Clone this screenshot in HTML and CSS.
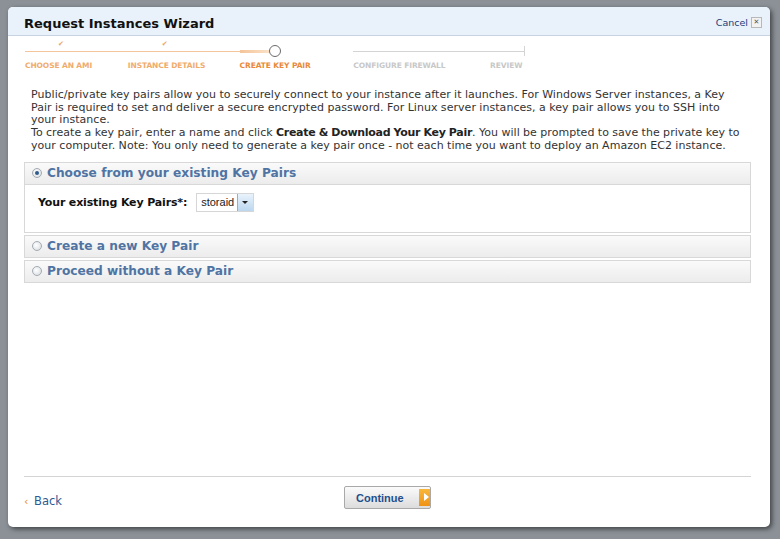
FILE: index.html
```html
<!DOCTYPE html>
<html>
<head>
    <meta charset="UTF-8">
    <title>Request Instances Wizard</title>
    <link rel="stylesheet" href="styles.css">
</head>
<body>
	<div class="dialog">
		<header class="dialog-head">
			<h1>Request Instances Wizard</h1>
			<a class="cancel" href="#">Cancel <span class="x">&#x2715;</span></a>
		</header>
		<div class="dialog-body">
			<ol class="steps">
				<li class="done"><span class="tick">&#x2714;</span>CHOOSE AN AMI</li>
				<li class="done"><span class="tick">&#x2714;</span>INSTANCE DETAILS</li>
				<li class="current"><span class="dot"></span>CREATE KEY PAIR</li>
				<li>CONFIGURE FIREWALL</li>
				<li class="last">REVIEW</li>
			</ol>

			<p class="intro">Public/private key pairs allow you to securely connect to your instance after it launches. For Windows Server instances, a Key Pair is required to set and deliver a secure encrypted password. For Linux server instances, a key pair allows you to SSH into your instance.<br>
			To create a key pair, enter a name and click <b>Create &amp; Download Your Key Pair</b>. You will be prompted to save the private key to your computer. Note: You only need to generate a key pair once - not each time you want to deploy an Amazon EC2 instance.</p>

			<section class="panel open">
				<div class="panel-head"><span class="radio on"></span>Choose from your existing Key Pairs</div>
				<div class="panel-body">
					<label>Your existing Key Pairs*:</label>
					<span class="select">storaid<span class="arrow"></span></span>
				</div>
			</section>
			<section class="panel">
				<div class="panel-head"><span class="radio"></span>Create a new Key Pair</div>
			</section>
			<section class="panel">
				<div class="panel-head"><span class="radio"></span>Proceed without a Key Pair</div>
			</section>
		</div>
		<footer class="dialog-foot">
			<a class="back" href="#"><span class="lt">&lsaquo;</span> Back</a>
			<button class="continue">Continue <span class="go"></span></button>
		</footer>
	</div>
</body>
</html>
```

FILE: styles.css
```css
html,body,h1,p,ol{
	margin: 0;
	padding: 0;
}
body{
	height: 539px;
	background: #8b9197;
	font-family: "DejaVu Sans", Verdana, sans-serif;
	padding: 7px 10px 12px 8px;
	box-sizing: border-box;
	overflow: hidden;
}
.dialog{
	height: 520px;
	background: #fff;
	border-radius: 5px;
	box-shadow: 2px 2px 5px rgba(0,0,0,0.55);
	display: flex;
	flex-direction: column;
	overflow: hidden;
}
.dialog-head{
	height: 28px;
	background: #e9f1fb;
	border-bottom: 1px solid #c7d3e0;
	display: flex;
	align-items: center;
	justify-content: space-between;
	padding: 0 8px 0 16px;
	flex-shrink: 0;
}
.dialog-head h1{
	font-size: 13px;
	color: #111;
	padding-top: 4px;
}
.cancel{
	font-size: 9.5px;
	color: #1c3a78;
	text-decoration: none;
	display: flex;
	align-items: center;
	gap: 3px;
	padding-top: 3px;
}
.cancel .x{
	display: inline-block;
	width: 9px;
	height: 9px;
	line-height: 9px;
	font-size: 7px;
	text-align: center;
	color: #555;
	border: 1px solid #b8b8b8;
	background: #f2f2f2;
}

.dialog-body{
	flex: 1;
	padding: 0 19px 0 16px;
}

/* wizard steps */
.steps{
	list-style: none;
	display: flex;
	width: 500px;
	margin: 0 0 0 1px;
	padding-top: 5px;
	height: 33px;
	position: relative;
}
.steps li{
	position: relative;
	padding-top: 20px;
	font-size: 7.5px;
	font-weight: bold;
	color: #c8c8c8;
	box-sizing: border-box;
	white-space: nowrap;
	letter-spacing: -0.1px;
}
.steps li:nth-child(1){width: 103px}
.steps li:nth-child(2){width: 112px}
.steps li:nth-child(3){width: 114px}
.steps li:nth-child(4){width: 137px}
.steps li.last{width: 35px}
.steps li:before{
	content: "";
	position: absolute;
	top: 10px; left: 0; right: 0;
	height: 1px;
	background: #d4d4d4;
}
.steps li.last:after{
	content: "";
	position: absolute;
	top: 5px; right: 0;
	width: 1px;
	height: 10px;
	background: #d4d4d4;
}
.steps li.done{color: #f0ab6c}
.steps li.done:before{background: #f4c49a}
.steps li.current{color: #e9893a}
.steps li.current:before{
	right: auto;
	width: 30px;
	background: linear-gradient(to right, #f4c49a, #fbe1c6);
	height: 3px;
	top: 9px;
}
.steps .tick{
	position: absolute;
	top: -1px;
	left: 33px;
	font-size: 7px;
	color: #eba56a;
}
.steps li:nth-child(2) .tick{left: 34px}
.steps .dot{
	position: absolute;
	top: 4px;
	left: 29px;
	width: 12px;
	height: 12px;
	border: 1.5px solid #6b6b6b;
	border-radius: 50%;
	background: #fff;
	box-sizing: border-box;
}

.intro{
	font-size: 11px;
	line-height: 12.7px;
	color: #333;
	margin: 15px 6px 9px 7px;
	letter-spacing: 0.05px;
	word-spacing: -0.2px;
}
.intro b{color: #222; letter-spacing: -0.3px}

/* key pair panels */
.panel{
	border: 1px solid #d8d8d8;
	margin-bottom: 2px;
}
.panel-head{
	height: 21px;
	background: linear-gradient(#fafafa, #ececec);
	display: flex;
	align-items: center;
	font-size: 12.2px;
	font-weight: bold;
	color: #4f74a3;
	padding-left: 7px;
}
.panel.open .panel-head{border-bottom: 1px solid #d8d8d8}
.radio{
	width: 10px;
	height: 10px;
	border-radius: 50%;
	border: 1px solid #a3abb3;
	background: radial-gradient(circle at 40% 40%, #fff, #d4d9de);
	margin-right: 5px;
	box-sizing: border-box;
	position: relative;
}
.radio.on:after{
	content: "";
	position: absolute;
	top: 2px; left: 2px;
	width: 4px;
	height: 4px;
	border-radius: 50%;
	background: #2f5c8c;
}
.panel-body{
	height: 47px;
	display: flex;
	align-items: flex-start;
	padding: 8px 0 0 13px;
	box-sizing: border-box;
}
.panel-body label{
	font-size: 11px;
	font-weight: bold;
	color: #111;
	margin: 3px 9px 0 0;
	letter-spacing: -0.15px;
}
.select{
	display: flex;
	align-items: center;
	height: 19px;
	border: 1px solid #d6d6d6;
	padding-left: 4px;
	font-family: "Liberation Sans", Arial, sans-serif;
	font-size: 11px;
	color: #222;
	box-sizing: border-box;
}
.select .arrow{
	position: relative;
	width: 15px;
	height: 17px;
	margin-left: 3px;
	border-left: 1px solid #8db2d8;
	background: linear-gradient(#e9f3fc, #bcd7ef);
}
.select .arrow:after{
	content: "";
	position: absolute;
	top: 7px; left: 4px;
	border-left: 3px solid transparent;
	border-right: 3px solid transparent;
	border-top: 3px solid #222;
}

.dialog-foot{
	height: 50px;
	margin: 0 19px 0 16px;
	border-top: 1px solid #d4d4d4;
	display: flex;
	align-items: center;
	position: relative;
	flex-shrink: 0;
}
.back{
	font-size: 11.5px;
	color: #2c5b95;
	text-decoration: none;
	margin-top: -2px;
}
.back .lt{color: #e58a3c; font-size: 11px; margin-right: 2px}
.continue{
	position: absolute;
	left: 320px;
	top: 9px;
	width: 87px;
	height: 23px;
	border: 1px solid #a9a9a9;
	border-radius: 2px;
	background: linear-gradient(#fbfbfb, #dcdcdc);
	font-family: "Liberation Sans", Arial, sans-serif;
	font-size: 11px;
	font-weight: bold;
	color: #1f4f8c;
	text-align: left;
	padding: 0 0 0 11px;
	display: flex;
	align-items: center;
	gap: 15px;
}
.continue .go{
	position: relative;
	width: 14px;
	height: 17px;
	background: linear-gradient(#f8b73a, #ef9316);
}
.continue .go:after{
	content: "";
	position: absolute;
	top: 4px; left: 5px;
	border-top: 4px solid transparent;
	border-bottom: 4px solid transparent;
	border-left: 5px solid #fff;
}
```
